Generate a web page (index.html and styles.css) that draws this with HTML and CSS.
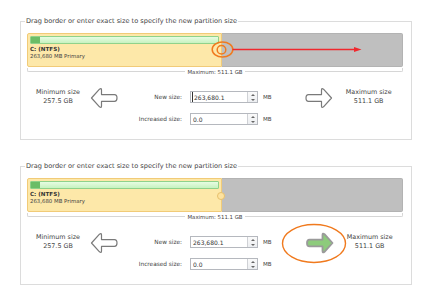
FILE: index.html
```html
<!DOCTYPE html>
<html lang="en">
<head>
  <meta charset="UTF-8">
  <title>Resize partition</title>
  <link rel="stylesheet" href="styles.css">
</head>
<body>
  <fieldset class="panel">
    <legend>Drag border or enter exact size to specify the new partition size</legend>
    <div class="disk">
      <div class="part">
        <div class="usage"><span class="used"></span></div>
        <div class="name">C: (NTFS)</div>
        <div class="info">263,680 MB Primary</div>
      </div>
      <div class="free"></div>
      <svg class="hint" viewBox="0 0 376 34">
        <ellipse cx="195.5" cy="16.5" rx="10.3" ry="7.6" fill="none" stroke="#f07a1e" stroke-width="1.5"/>
        <circle cx="194.5" cy="16.8" r="4.3" fill="none" stroke="#f07a1e" stroke-width="1.5"/>
        <line x1="205.5" y1="16.5" x2="328" y2="16.5" stroke="#f0282e" stroke-width="1.5"/>
        <path d="M327 14 L334.5 16.5 L327 19 Z" fill="#f0282e"/>
      </svg>
    </div>
    <div class="scale">
      <span class="line"></span>
      <span class="scale-label">Maximum: 511.1 GB</span>
      <span class="line right"></span>
    </div>
    <div class="controls">
      <div class="limit">Minimum size<br>257.5 GB</div>
      <svg class="arrow" viewBox="0 0 28 22">
        <path d="M1.5 11 L9.5 2.2 Q11.5 0.6 11.5 3 L11.5 7.6 L24.5 7.6 Q27 7.6 27 11 Q27 14.4 24.5 14.4 L11.5 14.4 L11.5 19 Q11.5 21.4 9.5 19.8 Z" fill="#fff" stroke="#7a7a7a" stroke-width="1.2" stroke-linejoin="round"/>
      </svg>
      <div class="fields">
        <div class="field">
          <label>New size:</label>
          <div class="spin"><input class="focused" value="263,680.1"><span class="spin-btns"><i class="up"></i><i class="down"></i></span></div>
          <span class="unit">MB</span>
        </div>
        <div class="field">
          <label>Increased size:</label>
          <div class="spin"><input value="0.0"><span class="spin-btns"><i class="up"></i><i class="down"></i></span></div>
          <span class="unit">MB</span>
        </div>
      </div>
      <svg class="arrow arrow-right" viewBox="0 0 28 22">
        <path d="M26.5 11 L18.5 2.2 Q16.5 0.6 16.5 3 L16.5 7.6 L3.5 7.6 Q1 7.6 1 11 Q1 14.4 3.5 14.4 L16.5 14.4 L16.5 19 Q16.5 21.4 18.5 19.8 Z" fill="#fff" stroke="#7a7a7a" stroke-width="1.2" stroke-linejoin="round"/>
      </svg>
      <div class="limit limit-max">Maximum size<br>511.1 GB</div>
    </div>
  </fieldset>

  <fieldset class="panel second">
    <legend>Drag border or enter exact size to specify the new partition size</legend>
    <div class="disk">
      <div class="part">
        <div class="usage"><span class="used"></span></div>
        <div class="name">C: (NTFS)</div>
        <div class="info">263,680 MB Primary</div>
        <span class="handle"></span>
      </div>
      <div class="free"></div>
    </div>
    <div class="scale">
      <span class="line"></span>
      <span class="scale-label">Maximum: 511.1 GB</span>
      <span class="line right"></span>
    </div>
    <div class="controls">
      <div class="limit">Minimum size<br>257.5 GB</div>
      <svg class="arrow" viewBox="0 0 28 22">
        <path d="M1.5 11 L9.5 2.2 Q11.5 0.6 11.5 3 L11.5 7.6 L24.5 7.6 Q27 7.6 27 11 Q27 14.4 24.5 14.4 L11.5 14.4 L11.5 19 Q11.5 21.4 9.5 19.8 Z" fill="#fff" stroke="#7a7a7a" stroke-width="1.2" stroke-linejoin="round"/>
      </svg>
      <div class="fields">
        <div class="field">
          <label>New size:</label>
          <div class="spin"><input value="263,680.1"><span class="spin-btns"><i class="up"></i><i class="down"></i></span></div>
          <span class="unit">MB</span>
        </div>
        <div class="field">
          <label>Increased size:</label>
          <div class="spin"><input value="0.0"><span class="spin-btns"><i class="up"></i><i class="down"></i></span></div>
          <span class="unit">MB</span>
        </div>
      </div>
      <div class="arrow-wrap">
        <svg class="arrow arrow-right" viewBox="0 0 28 22">
          <path d="M26.5 11 L18.5 2.2 Q16.5 0.6 16.5 3 L16.5 7.6 L3.5 7.6 Q1 7.6 1 11 Q1 14.4 3.5 14.4 L16.5 14.4 L16.5 19 Q16.5 21.4 18.5 19.8 Z" fill="#8dcb7c" stroke="#9a9a9a" stroke-width="1.8" stroke-linejoin="round"/>
        </svg>
        <svg class="ring" viewBox="0 0 66 41">
          <ellipse cx="33" cy="20.5" rx="31.5" ry="19" fill="none" stroke="#f07a1e" stroke-width="1.4"/>
        </svg>
      </div>
      <div class="limit limit-max">Maximum size<br>511.1 GB</div>
    </div>
  </fieldset>
</body>
</html>
```

FILE: styles.css
```css
body {
  margin: 0;
  padding-top: 16px;
  background: #fff;
  font-family: "DejaVu Sans", Verdana, sans-serif;
  font-size: 6px;
  color: #3a3a3a;
}
.panel {
  box-sizing: border-box;
  width: 392px;
  margin: 0 0 0 20px;
  padding: 0 8px 14px 6px;
  border: 1px solid #dcdcdc;
}
.panel.second {
  margin-top: 21px;
}
legend {
  padding: 0 1px;
  margin-left: -2px;
  line-height: 10px;
  font-size: 6.6px;
  color: #444;
}
.disk {
  position: relative;
  display: flex;
  height: 34px;
  margin-top: 7px;
}
.part {
  position: relative;
  box-sizing: border-box;
  width: 195px;
  padding: 2px 2px 0 2px;
  background: #fde8a9;
  border: 1px solid #f1cb78;
  border-radius: 2px 0 0 2px;
}
.usage {
  position: relative;
  height: 8px;
  box-sizing: border-box;
  border: 1px solid #8fd28a;
  border-radius: 1px;
  background: linear-gradient(#e6fce2, #c7f2c0);
}
.used {
  position: absolute;
  left: 0;
  top: 0;
  bottom: 0;
  width: 9px;
  background: #6cbd66;
}
.name {
  margin-top: 2px;
  font-size: 5.6px;
  font-weight: bold;
  line-height: 7px;
  color: #333;
}
.info {
  font-size: 5.4px;
  line-height: 7px;
  color: #444;
}
.handle {
  position: absolute;
  right: -4px;
  top: 13px;
  width: 6px;
  height: 6px;
  border-radius: 50%;
  background: #fde3a0;
  border: 1px solid #e7c06c;
}
.free {
  flex: 1;
  background: #bfbfbf;
  border: 1px solid #b3b3b3;
  border-left: none;
  border-radius: 0 2px 2px 0;
}
.hint {
  position: absolute;
  left: 0;
  top: 0;
  width: 376px;
  height: 34px;
  overflow: visible;
}
.scale {
  display: flex;
  align-items: flex-start;
  margin-top: 1px;
}
.line {
  flex: 1;
  height: 3px;
  border: 1px solid #d6d6d6;
  border-top: none;
  border-right: none;
  border-radius: 0 0 0 2px;
}
.line.right {
  border-left: none;
  border-right: 1px solid #d6d6d6;
  border-radius: 0 0 2px 0;
}
.scale-label {
  padding: 0 2px;
  line-height: 9px;
  font-size: 5.4px;
  color: #444;
}
.controls {
  display: flex;
  align-items: flex-start;
}
.limit {
  width: 56px;
  margin: 11px 0 0 3px;
  text-align: center;
  line-height: 9px;
  font-size: 6.4px;
  color: #444;
}
.limit-max {
  margin-left: 8px;
}
.arrow {
  display: block;
  width: 28px;
  height: 22px;
  margin: 10px 0 0 4px;
}
.fields {
  display: flex;
  flex-direction: column;
  gap: 10px;
  margin-top: 14px;
}
.field {
  display: flex;
  align-items: center;
  height: 12px;
}
.field label {
  width: 64px;
  margin-right: 8px;
  text-align: right;
  font-size: 5.8px;
  color: #444;
}
.spin {
  display: flex;
  box-sizing: border-box;
  width: 68px;
  height: 12px;
  border: 1px solid #b5b8be;
  background: #fff;
}
.spin input {
  flex: 1;
  min-width: 0;
  border: none;
  padding: 0 2px;
  font: inherit;
  color: #333;
  outline: none;
  background: transparent;
}
.spin input.focused {
  border-left: 1px solid #333;
  padding-left: 1px;
  margin-left: 1px;
}
.spin-btns {
  display: flex;
  flex-direction: column;
  justify-content: space-around;
  align-items: center;
  width: 9px;
  border-left: 1px solid #cfd1d5;
  background: linear-gradient(#fafafa, #eceef1);
}
.spin-btns i {
  width: 0;
  height: 0;
  border-left: 2px solid transparent;
  border-right: 2px solid transparent;
}
.spin-btns .up {
  border-bottom: 2px solid #666;
}
.spin-btns .down {
  border-top: 2px solid #666;
}
.unit {
  margin-left: 5px;
  font-size: 5.6px;
  color: #444;
}
.arrow-right {
  margin-left: 33px;
}
.arrow-wrap {
  position: relative;
}
.arrow-wrap .arrow-right {
  margin-left: 34px;
}
.ring {
  position: absolute;
  left: 9px;
  top: 1px;
  width: 66px;
  height: 41px;
}
```
